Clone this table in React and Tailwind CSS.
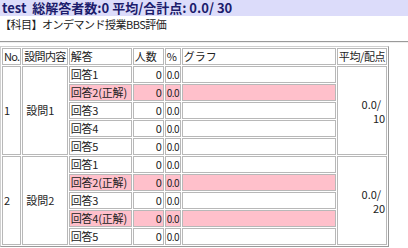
import React from "react";

const questions = [
  {
    no: 1,
    title: "設問1",
    score: "10",
    answers: [
      { label: "回答1", count: 0, pct: "0.0" },
      { label: "回答2(正解)", count: 0, pct: "0.0", correct: true },
      { label: "回答3", count: 0, pct: "0.0" },
      { label: "回答4", count: 0, pct: "0.0" },
      { label: "回答5", count: 0, pct: "0.0" },
    ],
  },
  {
    no: 2,
    title: "設問2",
    score: "20",
    answers: [
      { label: "回答1", count: 0, pct: "0.0" },
      { label: "回答2(正解)", count: 0, pct: "0.0", correct: true },
      { label: "回答3", count: 0, pct: "0.0" },
      { label: "回答4(正解)", count: 0, pct: "0.0", correct: true },
      { label: "回答5", count: 0, pct: "0.0" },
    ],
  },
];

const cell =
  "border border-[#b8b8b8] p-0 px-[1px] h-[17px] align-middle font-normal text-left whitespace-nowrap overflow-hidden";

export default function App() {
  return (
    <div
      className="w-[408px] h-[248px] bg-white text-[11px] leading-[13px] text-[#222] overflow-hidden"
      style={{ fontFamily: '"Noto Sans CJK JP", "Noto Sans", sans-serif' }}
    >
      <div className="h-[16px] bg-[#dcdcfa] text-[13px] leading-[16px] font-bold text-[#1c1c6c] pl-[2px]">
        test&nbsp; 総解答者数:0 平均/合計点: 0.0/ 30
      </div>
      <div className="h-[14px] leading-[14px] mt-[1px] tracking-[-0.5px]">【科目】オンデマンド授業BBS評価</div>
      <hr className="mt-[10px] border-0 border-t border-t-[#9a9a9a] border-b border-b-[#eeeeee]" />

      <table className="mt-[3px] border-separate border-spacing-[1px] border border-t-[#d0d0d0] border-l-[#d0d0d0] border-r-[#9a9a9a] border-b-[#9a9a9a]">
        <colgroup>
          <col className="w-[19px]" />
          <col className="w-[45px]" />
          <col className="w-[63px]" />
          <col className="w-[31px]" />
          <col className="w-[15px]" />
          <col className="w-[154px]" />
          <col className="w-[49px]" />
        </colgroup>
        <thead>
          <tr>
            <th className={cell + " px-0 tracking-[-0.8px]"}>No.</th>
            <th className={cell + " px-0 tracking-[-0.6px]"}>設問内容</th>
            <th className={cell}>解答</th>
            <th className={cell}>人数</th>
            <th className={cell + " px-0"}>%</th>
            <th className={cell}>グラフ</th>
            <th className={cell + " px-0 tracking-[-0.4px]"}>平均/配点</th>
          </tr>
        </thead>
        <tbody>
          {questions.map((q) =>
            q.answers.map((a, i) => (
              <tr key={q.no + "-" + i} className={a.correct ? "bg-[#ffc0cb]" : ""}>
                {i === 0 && (
                  <>
                    <td rowSpan={5} className={cell + " bg-white"}>{q.no}</td>
                    <td rowSpan={5} className={cell + " bg-white pl-[3px]"}>{q.title}</td>
                  </>
                )}
                <td className={cell + " tracking-[-0.2px]"}>{a.label}</td>
                <td className={cell + " text-right"}>{a.count}</td>
                <td className={cell + " px-0 text-[10px] tracking-[-0.6px]"}>{a.pct}</td>
                <td className={cell}></td>
                {i === 0 && (
                  <td rowSpan={5} className={cell + " bg-white text-right pr-[1px]"}>
                    <div className="pr-[4px] leading-[14px]">0.0/</div>
                    <div className="leading-[14px]">{q.score}</div>
                  </td>
                )}
              </tr>
            ))
          )}
        </tbody>
      </table>
    </div>
  );
}
